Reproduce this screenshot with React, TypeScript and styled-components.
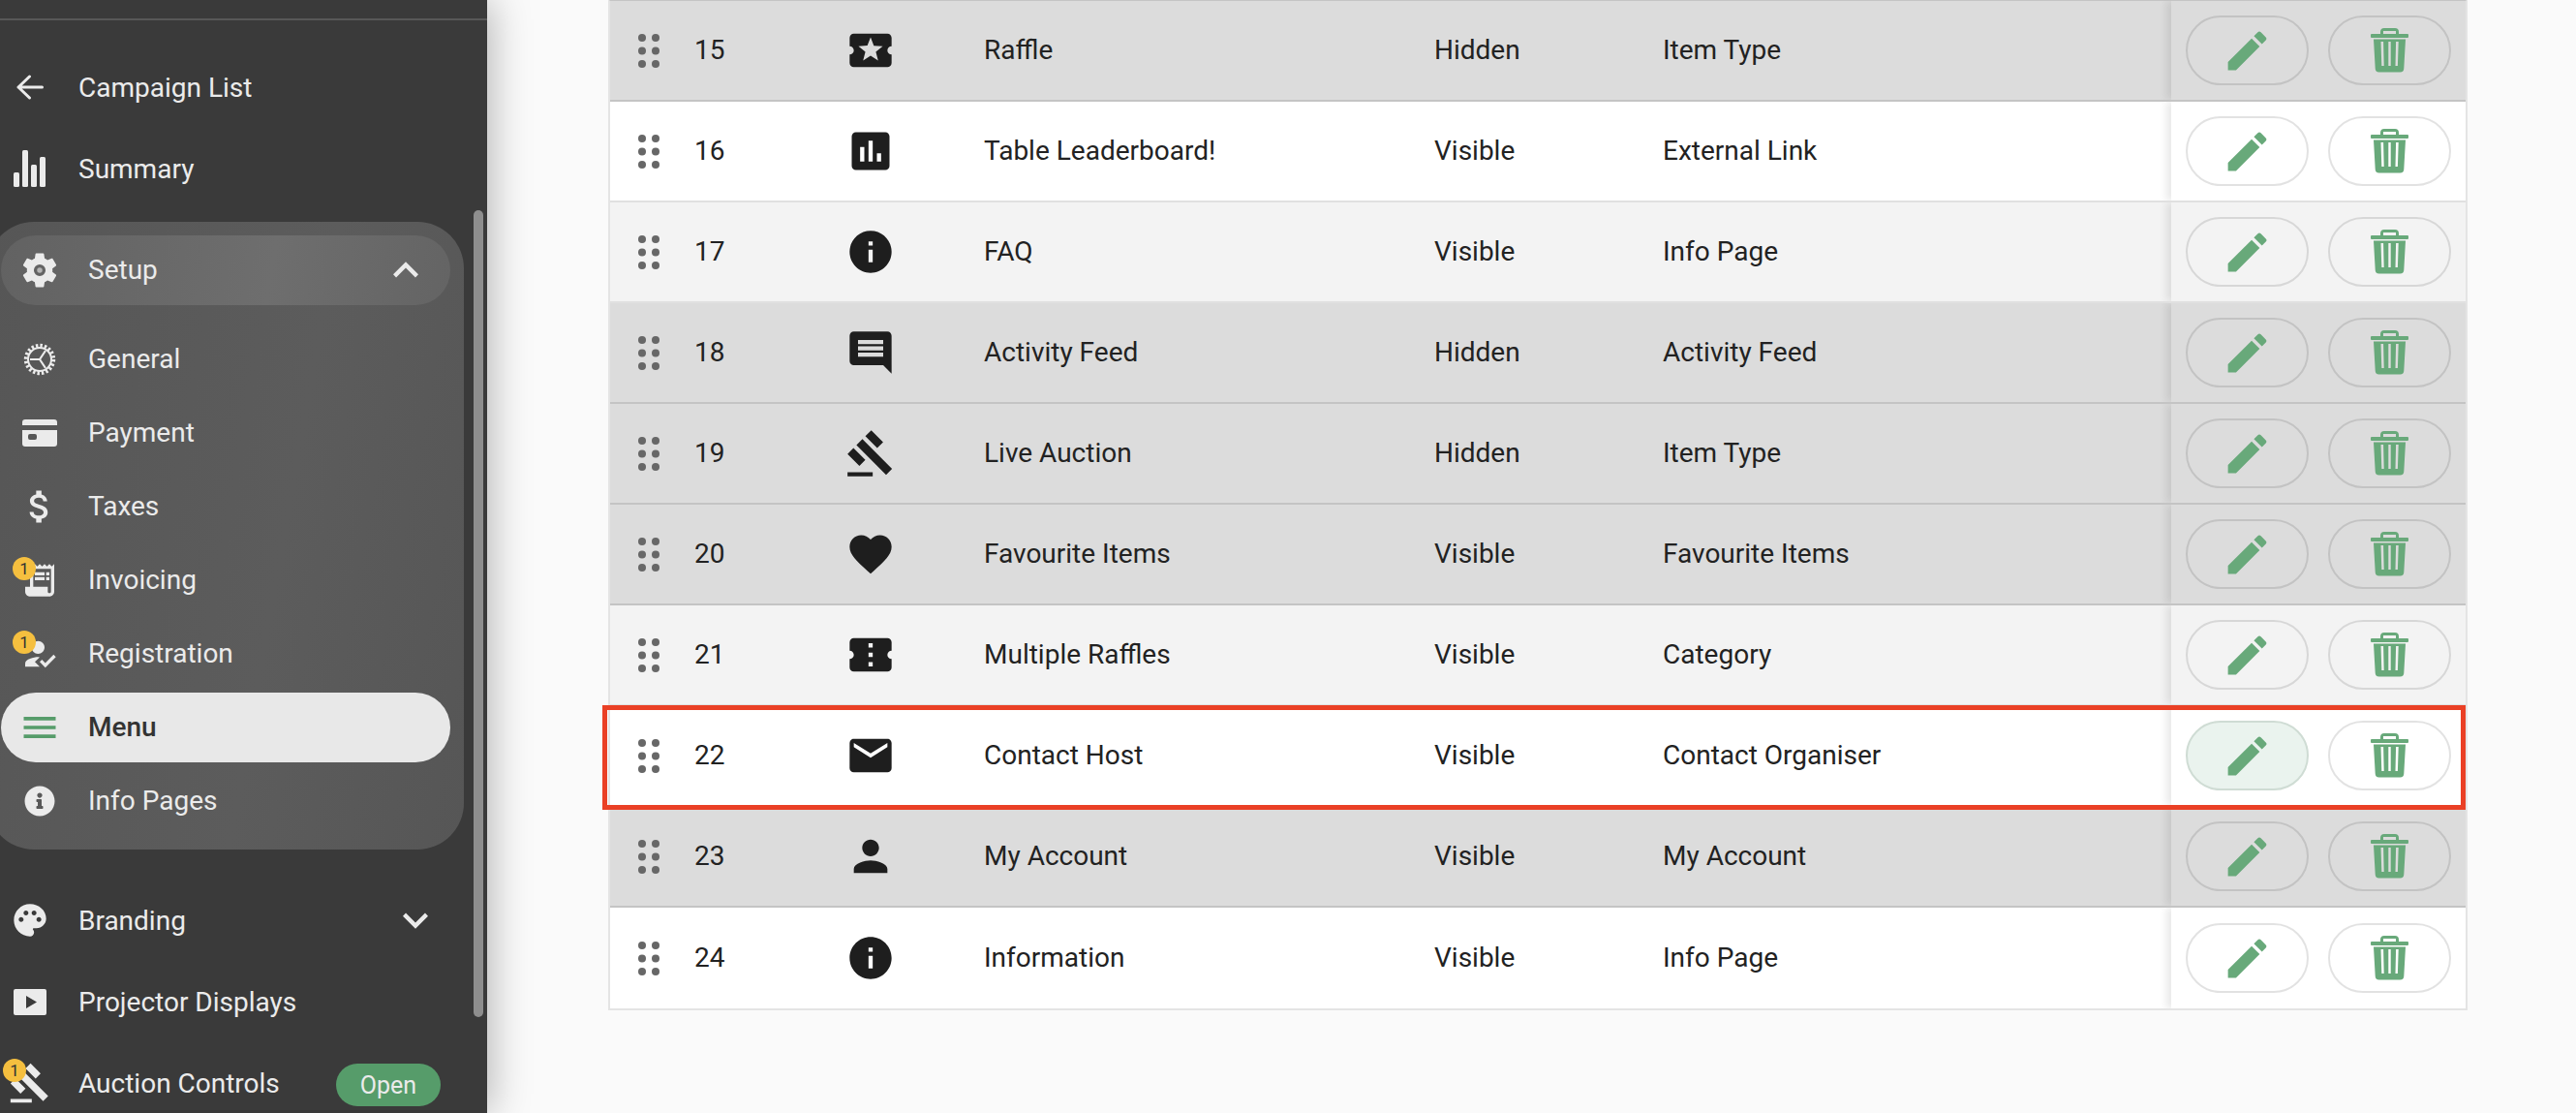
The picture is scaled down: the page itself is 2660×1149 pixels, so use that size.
import React from "react";
import styled, { createGlobalStyle } from "styled-components";
import {
	MdExpandLess,
	MdExpandMore,
	MdAttachMoney,
	MdReceiptLong,
	MdHowToReg,
	MdMenu,
	MdPalette,
	MdGavel,
	MdLocalActivity,
	MdAssessment,
	MdInfo,
	MdComment,
	MdFavorite,
	MdConfirmationNumber,
	MdMail,
	MdPerson,
	MdEdit,
} from "react-icons/md";
import { FaInfoCircle } from "react-icons/fa";

const GlobalStyle = createGlobalStyle`
	html, body {
		margin: 0;
		height: 100%;
		overflow: hidden;
		background: #fafafa;
		font-family: "Roboto", "Liberation Sans", sans-serif;
	}
	* { box-sizing: border-box; }
`;

// Hand drawn icons that the packages don't have
const BackArrowIcon = () => (
	<svg width="28" height="26" viewBox="0 0 28 26" fill="none" stroke="currentColor" strokeWidth="3" strokeLinecap="round" strokeLinejoin="round">
		<path d="M26.500 13H2M13.500 2 2 13l11.500 11" />
	</svg>
);

const BarsIcon = () => (
	<svg width="34" height="38" viewBox="0 0 34 38" fill="currentColor">
		<rect x="0" y="23" width="6" height="15" rx="1.5" />
		<rect x="9" y="0" width="6" height="38" rx="1.5" />
		<rect x="18" y="15" width="6" height="23" rx="1.5" />
		<rect x="27" y="7" width="6" height="31" rx="1.5" />
	</svg>
);

const SetupGearIcon = () => (
	<svg width="44" height="44" viewBox="0 0 24 24" fill="currentColor">
		<path
			fillRule="evenodd"
			d="M19.14 12.94c.04-.3.06-.61.06-.94 0-.32-.02-.64-.07-.94l2.03-1.58c.18-.14.23-.41.12-.61l-1.92-3.32c-.12-.22-.37-.29-.59-.22l-2.39.96c-.5-.38-1.03-.7-1.62-.94l-.36-2.54c-.04-.24-.24-.41-.48-.41h-3.84c-.24 0-.43.17-.47.41l-.36 2.54c-.59.24-1.13.57-1.62.94l-2.39-.96c-.22-.08-.47 0-.59.22L2.74 8.87c-.12.21-.08.47.12.61l2.03 1.58c-.05.3-.09.63-.09.94s.02.64.07.94l-2.03 1.58c-.18.14-.23.41-.12.61l1.92 3.32c.12.22.37.29.59.22l2.39-.96c.5.38 1.03.7 1.62.94l.36 2.54c.05.24.24.41.48.41h3.84c.24 0 .44-.17.47-.41l.36-2.54c.59-.24 1.13-.56 1.62-.94l2.39.96c.22.08.47 0 .59-.22l1.92-3.32c.12-.22.07-.47-.12-.61l-2.01-1.58zM12 15.300a3.300 3.300 0 1 1 0-6.600 3.300 3.300 0 0 1 0 6.600z"
		/>
		<circle cx="12" cy="12" r="1.500" opacity="0.6" />
	</svg>
);

const CogOutlineIcon = () => (
	<svg width="34" height="34" viewBox="0 0 34 34" fill="none" stroke="currentColor">
		<circle cx="17" cy="17" r="14.2" strokeWidth="4" strokeDasharray="2.4 2.06" />
		<circle cx="17" cy="17" r="12" strokeWidth="2" />
		<path d="M7 17h10M17 17l6-9M17 17l6 9" strokeWidth="2.2" />
	</svg>
);

const CardIcon = () => (
	<svg width="36" height="28" viewBox="0 0 36 28">
		<path
			fill="currentColor"
			fillRule="evenodd"
			d="M3 0h30a3 3 0 0 1 3 3v3H0V3a3 3 0 0 1 3-3zM0 11h36v14a3 3 0 0 1-3 3H3a3 3 0 0 1-3-3zM8 15a2 2 0 0 0-2 2v2a2 2 0 0 0 2 2h5a2 2 0 0 0 2-2v-2a2 2 0 0 0-2-2z"
		/>
	</svg>
);

const PlayScreenIcon = () => (
	<svg width="34" height="27" viewBox="0 0 34 27">
		<path
			fill="currentColor"
			fillRule="evenodd"
			d="M2 0h30a2 2 0 0 1 2 2v23a2 2 0 0 1-2 2H2a2 2 0 0 1-2-2V2a2 2 0 0 1 2-2zM13 7v13l11-6.500z"
		/>
	</svg>
);

const DragIcon = () => (
	<svg width="22" height="35" viewBox="0 0 22 35" fill="#676767">
		{[4, 17.500, 31].map((cy) =>
			[4, 18].map((cx) => <circle key={`${cx}-${cy}`} cx={cx} cy={cy} r="4" />),
		)}
	</svg>
);

const TrashIcon = () => (
	<svg width="39" height="46" viewBox="0 0 39 46">
		<path
			fill="currentColor"
			fillRule="evenodd"
			d="M14 0h11a4 4 0 0 1 4 4v2h9a1 1 0 0 1 1 1v2a1 1 0 0 1-1 1H1a1 1 0 0 1-1-1V7a1 1 0 0 1 1-1h9V4a4 4 0 0 1 4-4zM13 3v3h13V3z"
		/>
		<path
			fill="currentColor"
			fillRule="evenodd"
			d="M3 11.500h33l-1.700 30a4 4 0 0 1-4 4H8.700a4 4 0 0 1-4-4zM10.500 14l.8 25h2.400l-.6-25zM18.300 14v25h2.400V14zM26.100 14l-.6 25h2.400l.8-25z"
		/>
	</svg>
);

type RowTone = "dark" | "light" | "white";

type RowData = {
	position: number;
	icon: React.ReactNode;
	name: string;
	status: string;
	type: string;
	tone: RowTone;
	highlighted?: boolean;
};

const rows: RowData[] = [
	{ position: 15, icon: <MdLocalActivity size={52} />, name: "Raffle", status: "Hidden", type: "Item Type", tone: "dark" },
	{ position: 16, icon: <MdAssessment size={52} />, name: "Table Leaderboard!", status: "Visible", type: "External Link", tone: "white" },
	{ position: 17, icon: <MdInfo size={52} />, name: "FAQ", status: "Visible", type: "Info Page", tone: "light" },
	{ position: 18, icon: <MdComment size={52} />, name: "Activity Feed", status: "Hidden", type: "Activity Feed", tone: "dark" },
	{ position: 19, icon: <MdGavel size={52} />, name: "Live Auction", status: "Hidden", type: "Item Type", tone: "dark" },
	{ position: 20, icon: <MdFavorite size={52} />, name: "Favourite Items", status: "Visible", type: "Favourite Items", tone: "dark" },
	{ position: 21, icon: <MdConfirmationNumber size={52} />, name: "Multiple Raffles", status: "Visible", type: "Category", tone: "light" },
	{ position: 22, icon: <MdMail size={52} />, name: "Contact Host", status: "Visible", type: "Contact Organiser", tone: "white", highlighted: true },
	{ position: 23, icon: <MdPerson size={52} />, name: "My Account", status: "Visible", type: "My Account", tone: "dark" },
	{ position: 24, icon: <MdInfo size={52} />, name: "Information", status: "Visible", type: "Info Page", tone: "white" },
];

const App = () => {
	return (
		<Page>
			<GlobalStyle />
			<Sidebar>
				<TopStrip />
				<NavList>
					<NavItem>
						<NavIcon><BackArrowIcon /></NavIcon>
						Campaign List
					</NavItem>
					<NavItem>
						<NavIcon><BarsIcon /></NavIcon>
						Summary
					</NavItem>
					<Group>
						<GroupHeader>
							<NavIcon><SetupGearIcon /></NavIcon>
							Setup
							<Chevron><MdExpandLess size={52} /></Chevron>
						</GroupHeader>
						<SubList>
							<SubItem>
								<NavIcon><CogOutlineIcon /></NavIcon>
								General
							</SubItem>
							<SubItem>
								<NavIcon><CardIcon /></NavIcon>
								Payment
							</SubItem>
							<SubItem>
								<NavIcon><MdAttachMoney size={44} /></NavIcon>
								Taxes
							</SubItem>
							<SubItem>
								<NavIcon>
									<MdReceiptLong size={40} />
									<Badge>1</Badge>
								</NavIcon>
								Invoicing
							</SubItem>
							<SubItem>
								<NavIcon>
									<MdHowToReg size={40} />
									<Badge>1</Badge>
								</NavIcon>
								Registration
							</SubItem>
							<SubItem $active>
								<NavIcon $green><MdMenu size={44} /></NavIcon>
								Menu
							</SubItem>
							<SubItem>
								<NavIcon><FaInfoCircle size={32} /></NavIcon>
								Info Pages
							</SubItem>
						</SubList>
					</Group>
					<NavItem $spaced>
						<NavIcon><MdPalette size={40} /></NavIcon>
						Branding
						<BrandingChevron><MdExpandMore size={52} /></BrandingChevron>
					</NavItem>
					<NavItem>
						<NavIcon><PlayScreenIcon /></NavIcon>
						Projector Displays
					</NavItem>
					<NavItem>
						<NavIcon>
							<MdGavel size={44} />
							<AuctionBadge>1</AuctionBadge>
						</NavIcon>
						Auction Controls
						<OpenPill>Open</OpenPill>
					</NavItem>
				</NavList>
				<ScrollThumb />
			</Sidebar>
			<Main>
				<Table>
					{rows.map((row) => (
						<Row key={row.position} $tone={row.tone}>
							<DragCell><DragIcon /></DragCell>
							<Cell>{row.position}</Cell>
							<IconCell>{row.icon}</IconCell>
							<Cell>{row.name}</Cell>
							<Cell>{row.status}</Cell>
							<Cell>{row.type}</Cell>
							<ActionCell $tone={row.tone}>
								<ActionButton $selected={row.highlighted}><MdEdit size={53} /></ActionButton>
								<ActionButton><TrashIcon /></ActionButton>
							</ActionCell>
							{row.highlighted && <HighlightFrame />}
						</Row>
					))}
				</Table>
			</Main>
		</Page>
	);
};

export default App;

// Styled Components
const Page = styled.div`
	display: flex;
	height: 1149px;
	overflow: hidden;
	background: #fafafa;
`;

const Sidebar = styled.aside`
	position: relative;
	z-index: 2;
	flex: 0 0 503px;
	height: 1149px;
	overflow: hidden;
	background: #3a3a3a;
	color: #ebebeb;
	font-size: 28px;
	box-shadow: 2px 0 40px rgba(0, 0, 0, 0.3);
	clip-path: inset(0 -70px 0 0);
`;

const TopStrip = styled.div`
	height: 21px;
	border-bottom: 2px solid #575757;
`;

const NavList = styled.nav`
	display: flex;
	flex-direction: column;
	padding-top: 27px;
`;

const NavItem = styled.div<{ $spaced?: boolean }>`
	display: flex;
	flex: 0 0 84px;
	align-items: center;
	gap: 28px;
	padding-left: 9px;
	margin-top: ${(p) => (p.$spaced ? "31px" : "0")};
`;

const NavIcon = styled.span<{ $green?: boolean }>`
	position: relative;
	display: flex;
	flex: 0 0 44px;
	align-items: center;
	justify-content: center;
	height: 44px;
	color: ${(p) => (p.$green ? "#569c6a" : "#ebebeb")};
`;

const Group = styled.section`
	width: 492px;
	margin: 13px 0 0 -13px;
	padding: 14px;
	border-radius: 48px;
	background: linear-gradient(100deg, #565656, #5c5c5c 60%, #565656);
`;

const GroupHeader = styled.div`
	display: flex;
	align-items: center;
	gap: 28px;
	height: 72px;
	padding: 0 0 1px 18px;
	border-radius: 36px;
	background: linear-gradient(100deg, #626262, #6e6e6e 60%, #646464);
`;

const Chevron = styled.span`
	display: flex;
	margin-left: auto;
	margin-right: 20px;
`;

const BrandingChevron = styled(Chevron)`
	margin-right: 48px;
`;

const SubList = styled.div`
	display: flex;
	flex-direction: column;
	gap: 4px;
	margin-top: 20px;
`;

const SubItem = styled.div<{ $active?: boolean }>`
	display: flex;
	align-items: center;
	gap: 28px;
	height: 72px;
	padding: 0 0 1px 18px;
	border-radius: 36px;
	background: ${(p) => (p.$active ? "#e8e8e8" : "transparent")};
	color: ${(p) => (p.$active ? "#333" : "inherit")};
	font-weight: ${(p) => (p.$active ? 500 : 400)};
`;

const Badge = styled.span`
	position: absolute;
	top: -2px;
	left: -6px;
	display: flex;
	align-items: center;
	justify-content: center;
	width: 24px;
	height: 24px;
	border-radius: 50%;
	background: #f5bf3f;
	color: #333;
	font-size: 17px;
`;

const AuctionBadge = styled(Badge)`
	top: -3px;
	left: -6px;
`;

const OpenPill = styled.span`
	display: flex;
	align-items: center;
	justify-content: center;
	width: 108px;
	height: 44px;
	margin-top: 4px;
	margin-left: auto;
	margin-right: 48px;
	border-radius: 22px;
	background: #569c6a;
	font-size: 25px;
`;

const ScrollThumb = styled.div`
	position: absolute;
	top: 217px;
	left: 489px;
	width: 10px;
	height: 833px;
	border-radius: 5px;
	background: #8e8e8e;
`;

const Main = styled.main`
	flex: 1;
	padding-left: 125px;
	margin-top: -1px;
`;

const Table = styled.div`
	width: 1920px;
	border: 2px solid #e4e4e4;
	border-top-color: #c4c4c4;
	color: #222;
	font-size: 28px;
`;

const toneColors: Record<RowTone, { bg: string; line: string }> = {
	dark: { bg: "#dcdcdc", line: "#c4c4c4" },
	light: { bg: "#f3f3f3", line: "#e0e0e0" },
	white: { bg: "#ffffff", line: "#e0e0e0" },
};

const Row = styled.div<{ $tone: RowTone }>`
	position: relative;
	display: grid;
	grid-template-columns: 87px 156px 143px 465px 236px 525px 304px;
	align-items: center;
	height: 104px;
	background: ${(p) => toneColors[p.$tone].bg};
	border-bottom: 2px solid ${(p) => toneColors[p.$tone].line};

	&:last-child {
		border-bottom: 0;
	}
`;

const Cell = styled.div`
	padding-bottom: 1px;
	white-space: nowrap;
`;

const DragCell = styled.div`
	display: flex;
	padding-left: 29px;
`;

const IconCell = styled.div`
	display: flex;
	color: #1e1e1e;
`;

const ActionCell = styled.div<{ $tone: RowTone }>`
	display: flex;
	align-items: center;
	gap: 20px;
	height: 100%;
	padding-left: 15px;
	background: ${(p) => toneColors[p.$tone].bg};
	box-shadow: -5px 0 8px rgba(0, 0, 0, 0.09);
	clip-path: inset(0 0 0 -16px);
`;

const ActionButton = styled.button<{ $selected?: boolean }>`
	display: flex;
	flex: 0 0 127px;
	align-items: center;
	justify-content: center;
	height: 72px;
	padding: 0;
	border: 2px solid ${(p) => (p.$selected ? "#cfdcd4" : "rgba(0, 0, 0, 0.115)")};
	border-radius: 36px;
	background: ${(p) => (p.$selected ? "#eaf3ee" : "transparent")};
	color: #68a97a;
`;

const HighlightFrame = styled.div`
	position: absolute;
	top: -1px;
	right: 0;
	bottom: -5px;
	left: -8px;
	z-index: 1;
	border: 5px solid #ea4025;
	pointer-events: none;
`;
